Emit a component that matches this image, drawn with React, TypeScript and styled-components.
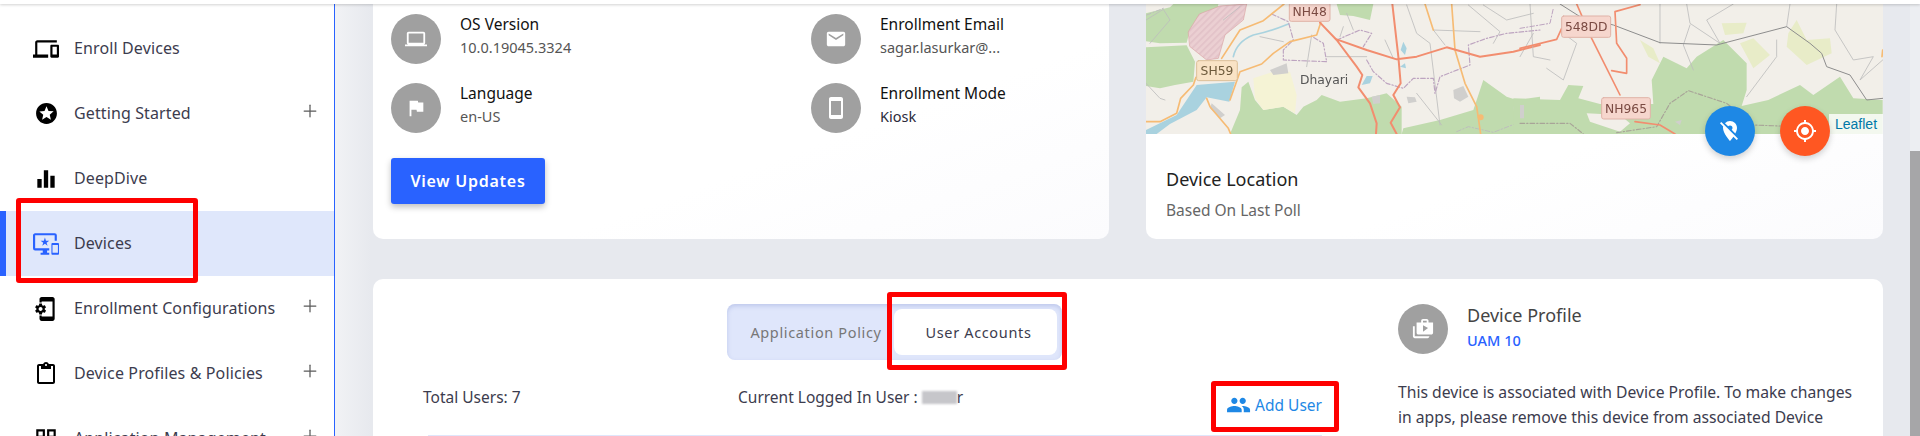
import React from "react";
import styled, { createGlobalStyle } from "styled-components";
import { Plus } from "lucide-react";
import {
  MdDevices, MdStars, MdEqualizer, MdImportantDevices, MdPhonelinkSetup, MdContentPaste, MdOutlineGridView,
  MdLaptop, MdFlag, MdEmail, MdStayCurrentPortrait, MdLocationOff, MdGpsFixed, MdPeople, MdShopTwo,
} from "react-icons/md";

const FONT = `"Noto Sans", "Noto Sans CJK JP", sans-serif`;

const Global = createGlobalStyle`
  html, body { margin: 0; padding: 0; height: 436px; overflow: hidden; background: #e8eaef; }
  * { box-sizing: border-box; }
  body { font-family: ${FONT}; }
`;

const Shell = styled.div`
  position: relative; width: 1920px; height: 436px; overflow: hidden; display: flex; flex-direction: column;
`;
const TopBar = styled.header`
  height: 4px; flex: none; background: #fff; box-shadow: 0 1px 3px rgba(0,0,0,.18); position: relative; z-index: 3;
`;
const Body = styled.div`
  flex: 1; min-height: 0; display: grid; grid-template-columns: 335px 1fr 10px;
`;
const Sidebar = styled.nav`
  background: #fff; border-right: 1px solid #2962ff; padding-top: 12px; overflow: hidden;
`;
const NavItem = styled.div<{ $active?: boolean }>`
  height: 65px; flex: none; display: flex; align-items: center; position: relative;
  background: ${p => (p.$active ? "#dfe7fb" : "transparent")};
  border-left: ${p => (p.$active ? "6px solid #2962ff" : "0")};
  padding-left: ${p => (p.$active ? "27px" : "33px")};
  color: ${p => (p.$active ? "#2962ff" : "#000")};
`;
const NavIcon = styled.span`
  width: 26px; height: 26px; display: flex; align-items: center; justify-content: center; flex: none; margin-right: 15px;
`;
const NavLabel = styled.span`
  font-size: 16px; line-height: 24px; color: #3c3c4e; flex: 1; letter-spacing: .12px; margin-top: -2px; white-space: nowrap;
`;
const Expand = styled.span`
  width: 20px; height: 20px; display: flex; margin-right: 14px; color: #5a5a5a; margin-top: -6px;
`;
const Main = styled.main`
  padding: 0 27px 0 38px; background: linear-gradient(90deg, #f1f2f5 0, #e7e9ee 36px);
  display: flex; flex-direction: column; gap: 40px; overflow: hidden;
`;
const TopRow = styled.div`
  display: grid; grid-template-columns: 736px 737px; gap: 37px; flex: none;
`;
const Card = styled.section`
  background: linear-gradient(160deg, #fff 60%, #fbfbfd);
  border-radius: 0 0 10px 10px; height: 235px; overflow: hidden;
`;
const InfoCard = styled(Card)`
  padding: 10px 18px 0;
`;
const InfoGrid = styled.div`
  display: grid; grid-template-columns: 420px 1fr; row-gap: 19px;
`;
const Info = styled.div`
  display: flex; gap: 19px;
`;
const Circle = styled.span`
  width: 50px; height: 50px; border-radius: 50%; background: #a0a0a0; color: #fff; flex: none;
  display: flex; align-items: center; justify-content: center;
`;
const InfoText = styled.div`
  margin-top: -2px; display: flex; flex-direction: column;
`;
const InfoTitle = styled.span`
  font-size: 15.5px; line-height: 24px; color: #111;
`;
const InfoValue = styled.span<{ $dark?: boolean }>`
  font-size: 14.5px; line-height: 24px; margin-top: -1px; color: ${p => (p.$dark ? "#2b2b3b" : "#555")};
`;
const ViewButton = styled.button`
  margin-top: 25px; width: 154px; height: 46px; border: 0; border-radius: 3px; background: #2962ff; color: #fff;
  font: 600 16px ${FONT}; letter-spacing: .75px; box-shadow: 0 3px 6px rgba(0,0,0,.25); display: block;
`;
const MapWrap = styled.div`
  position: relative; height: 130px;
`;
const MapSvg = styled.svg`
  display: block; width: 737px; height: 130px; filter: blur(.35px);
`;
const Attribution = styled.a`
  position: absolute; right: 0; bottom: 0; height: 20px; width: 54px; padding-left: 6px; background: rgba(255,255,255,.8);
  font: 14px/20px "Liberation Sans", sans-serif; color: #0078a8;
`;
const Fab = styled.span<{ $bg: string; $left: number }>`
  position: absolute; top: 102px; left: ${p => p.$left}px; width: 50px; height: 50px; border-radius: 50%;
  background: ${p => p.$bg}; color: #fff; display: flex; align-items: center; justify-content: center;
  box-shadow: 0 3px 6px rgba(0,0,0,.18);
`;
const Caption = styled.div`
  padding: 32px 20px 0;
`;
const CaptionTitle = styled.div`
  font-size: 18px; line-height: 26px; color: #222;
`;
const CaptionSub = styled.div`
  margin-top: 6px; font-size: 15.5px; line-height: 24px; color: #666;
`;
const WideCard = styled.section`
  background: #fff; border-radius: 10px 10px 0 0; display: grid; grid-template-columns: 1025px 1fr;
  flex: 1; padding-top: 25px; min-height: 200px;
`;
const LeftCol = styled.div`
  padding: 0 76px 0 50px; display: flex; flex-direction: column;
`;
const Tabs = styled.div`
  margin-left: 304px; width: 335px; height: 56px; border-radius: 8px; background: #dfe6fb; padding: 5px;
  display: flex; box-shadow: inset 0 2px 4px rgba(90,110,190,.25);
`;
const Tab = styled.div<{ $active?: boolean }>`
  height: 46px; flex: ${p => (p.$active ? "0 0 163px" : "1")}; border-radius: 8px; display: flex; align-items: center;
  background: ${p => (p.$active ? "#fff" : "transparent")}; justify-content: center; padding-left: 6px;
  font-size: 14.5px; font-weight: 400; letter-spacing: .65px; white-space: nowrap; color: ${p => (p.$active ? "#3c3c4e" : "#777")};
`;
const StatsRow = styled.div`
  margin-top: 25px; display: flex; height: 50px; align-items: flex-start; font-size: 15.5px; line-height: 24px; color: #3c3c4e;
`;
const Total = styled.span`
  width: 315px;
`;
const Current = styled.span`
  flex: 1; display: flex; align-items: center; white-space: nowrap;
`;
const Blurred = styled.span`
  display: inline-block; width: 35px; height: 13px; margin-left: 4px; background: #c6c6ca; filter: blur(1px);
`;
const AddUser = styled.span`
  display: flex; align-items: center; gap: 4px; margin-top: 7px; color: #1e88e5; font-size: 15.5px; width: 96px; flex: none; white-space: nowrap;
`;
const Divider = styled.div`
  margin-left: 5px; height: 1px; background: #dfe6fb;
`;
const ProfileCol = styled.div`
  width: 466px;
`;
const ProfileHead = styled.div`
  display: flex; gap: 19px; height: 50px;
`;
const ProfileText = styled.div`
  display: flex; flex-direction: column; margin-top: -2px;
`;
const ProfileTitle = styled.span`
  font-size: 18px; line-height: 26px; color: #444;
`;
const ProfileLink = styled.span`
  font-size: 14.5px; line-height: 24px; color: #2962ff; font-weight: 500;
`;
const ProfileBody = styled.p`
  margin: 26px 0 0; font-size: 15.7px; line-height: 25px; color: #3c3c4e;
`;
const Track = styled.div`
  padding-top: 147px; background: #eceef2;
`;
const Thumb = styled.div`
  height: 300px; background: #a6a6a8;
`;
const Callout = styled.div<{ $x: number; $y: number; $w: number; $h: number }>`
  position: absolute; left: ${p => p.$x}px; top: ${p => p.$y}px; width: ${p => p.$w}px; height: ${p => p.$h}px;
  border: 5px solid #fe0000; border-radius: 3px; z-index: 5; pointer-events: none;
`;

const ORANGE = "#f6bb74";
const RED = "#f28d6f";
const ADMIN = "#bda4c0";
const GREY = "#bdbdbd";
const FOREST = "#c0dbae";

const Shield = ({ x, y, w, h, label, warm }: { x: number; y: number; w: number; h: number; label: string; warm?: boolean }) => (
  <g>
    <rect x={x} y={y} width={w} height={h} rx={6} fill={warm ? "#f9e3c6" : "#f6d6cd"} stroke={warm ? "#dcbf98" : "#e0b3a8"} strokeWidth={3} />
    <text x={x + w / 2} y={y + h / 2 + 13} textAnchor="middle" fontSize={37} fontFamily="DejaVu Sans, sans-serif" fill={warm ? "#6d5a3c" : "#7a4a42"}>
      {label}
    </text>
  </g>
);

const MapDrawing = () => (
  <MapSvg viewBox="0 4 737 130" preserveAspectRatio="none">
    <defs>
      <pattern id="hatch" width="14" height="14" patternUnits="userSpaceOnUse" patternTransform="rotate(45)">
        <rect width="14" height="14" fill="#ebcfd2" />
        <rect width="5" height="14" fill="#e2c2c8" />
      </pattern>
    </defs>
    <rect x="0" y="0" width="737" height="134" fill="#f2efe9" />
    <g transform="translate(-6,0) scale(.33333)" fill="none" strokeLinecap="round" strokeLinejoin="round">
      <path fill={FOREST} d="M18 40 L90 22 L100 12 L235 12 L230 55 L150 90 L140 128 L60 130 L18 124Z" />
      <path fill={FOREST} d="M18 142 L140 136 L165 185 L160 245 L105 255 L60 265 L18 258Z" />
      <path fill={FOREST} d="M590 12 L700 12 L690 60 L640 48 L600 45Z" />
      <path fill={FOREST} d="M305 262 L325 245 L345 300 L370 330 L430 320 L470 345 L490 320 L530 300 L545 285 L600 305 L680 295 L740 280 L785 320 L785 402 L270 402 L300 330Z" />
      <path fill={FOREST} d="M1030 240 L1100 290 L1130 300 L1200 290 L1200 402 L785 402 L790 385 L900 360 L1000 330Z" />
      <path fill="#f5f3d5" d="M340 235 L400 215 L450 215 L470 285 L465 340 L430 320 L370 330 L345 295Z" />
      <path fill="#f2efe9" d="M180 330 L230 310 L265 340 L270 402 L140 402Z" />
      <path fill="url(#hatch)" stroke="#dba4a4" strokeWidth="2" d="M145 95 L178 42 L240 18 L320 12 L310 60 L255 105 L235 175 L200 180 L150 140Z" />
      <path stroke="#aad3df" strokeWidth="5" d="M280 170 Q290 125 340 105 Q390 95 445 72" />
      <path fill="#a9d2df" d="M18 402 L18 390 L110 345 L170 255 L285 245 L268 305 L200 292 L170 330 L90 372 L50 402Z" />
      <path fill="#a9d2df" d="M665 255 L680 228 L698 228 L690 250Z M782 150 L790 125 L800 145 L795 165Z M780 200 L795 190 L798 205Z" />
      <path fill="#d0cfcd" d="M940 270 L970 258 L985 290 L960 305 L942 295Z M1120 320 L1150 310 L1155 350 L1125 355Z M800 290 L825 292 L830 305 L805 310Z M695 290 L720 285 L720 310 L700 312Z M390 210 L440 190 L445 220 L400 225Z M215 310 L255 345 L240 355 L210 325Z" />
      <path stroke={GREY} strokeWidth="2.5" d="M18 60 L70 28 L90 60 L30 130 M18 250 L60 295 L75 300 M515 105 L500 200 M430 125 L360 110 M560 170 L680 170 M620 40 L640 90 M735 120 L760 175 M880 90 L915 135 M985 15 L1080 95 L1060 130 M1030 15 L1100 60 L1180 40 M800 15 L830 100 L870 130 L900 375 M830 280 L905 375 M880 90 L1020 95 M1180 100 L1140 170 M250 60 L300 20 M610 80 L600 110" />
      <path stroke={ADMIN} strokeWidth="3.5" strokeDasharray="14 6 4 6" d="M395 42 L445 65 L460 120 L430 150 L430 180 L560 185 L550 130 L520 112 M590 120 L660 90 L695 100 L670 140 M680 180 L700 215 L740 250 L790 265 L820 235 L880 235 L885 280 L900 230 L990 195 L985 135 L1040 115 L1100 100 L1200 90" />
      <path stroke={GREY} strokeWidth="3" strokeDasharray="14 6 4 6" d="M950 395 L985 380 L1060 397 L1130 370 L1200 365 M20 45 L70 25" />
      <path stroke={ORANGE} strokeWidth="5" d="M18 365 L60 365 L110 340 L122 295 L160 255 L168 232 M245 175 L300 90 L370 62 L432 12 M270 300 L300 215 L365 192 L400 160 L450 125 L530 105 L542 68 M200 295 L210 320 L265 385 L272 402 M855 12 L880 90 M935 12 L945 150 L975 250 L1010 320 L1022 402" />
      <circle cx="1022" cy="352" r="9" fill={ORANGE} />
      <path stroke={RED} strokeWidth="6" d="M540 68 L590 120 L650 200 L667 225 L655 262 L690 310 L710 370 L708 402 M590 118 L680 150 L770 178 L830 170 L920 142 L1020 170 L1120 155 L1200 135 M757 12 L775 170 L782 250 L760 285 L780 322 L752 368 L770 402" />
      <Shield x={448} y={8} w={122} h={56} label="NH48" />
      <Shield x={170} y={182} w={122} h={60} label="SH59" warm />
      <text x="480" y="252" fontSize="37" fontFamily="DejaVu Sans, sans-serif" fill="#555">Dhayari</text>
    </g>
    <g transform="translate(374,0) scale(.33333)" fill="none" strokeLinecap="round" strokeLinejoin="round">
      <path fill={FOREST} d="M-20 295 L120 300 L145 255 L190 258 L175 295 L240 312 L400 312 L395 240 L430 170 L500 205 L530 170 L610 120 L680 190 L680 270 L665 318 L745 300 L840 255 L880 285 L960 230 L1000 295 L1088 300 L1088 402 L-20 402Z" />
      <path fill="#e8ecc8" d="M605 70 L680 68 L670 100 L615 105Z M805 100 L830 60 L860 120 L930 115 L935 160 L860 195 L800 140Z M660 130 L700 115 L750 165 L700 205Z M360 120 L400 145 L420 190 L385 170Z" />
      <path fill="#f2efe9" d="M200 340 L300 345 L330 370 L300 395 L210 365Z" />
      <path stroke={GREY} strokeWidth="2.5" d="M30 12 L40 170 L90 180 M80 205 L130 240 L170 130 L130 100 M500 12 L510 70 L600 130 L560 60 L640 12 M810 12 L800 80 M950 12 L945 90 L1000 180 L1060 170 L1020 240 L1088 180 M680 290 L770 170 L770 120 M510 75 L490 135 L520 210 M420 12 L420 130" />
      <path stroke="#8d8d8d" strokeWidth="3" d="M120 12 L180 50 L280 75 L420 128 L590 135 L800 80 L870 130 L905 160 L920 200 L990 225 L1040 300 L1088 295" />
      <path stroke={ADMIN} strokeWidth="3" strokeDasharray="14 6 4 6" d="M0 85 L90 70 L100 25" />
      <path stroke="#a8a498" strokeWidth="3.5" strokeDasharray="14 6 4 6" d="M0 370 L150 370 L190 402 M290 398 L410 380 L450 310 L505 272 L620 310 L700 375 L780 378" />
      <path stroke={RED} strokeWidth="5" d="M0 145 L110 118 L125 85 M170 12 L215 115 L300 285 M290 130 L285 35 L360 14 M290 130 L320 175 L320 220 L275 212 M345 365 L420 375 L465 402" />
      <path stroke={ORANGE} strokeWidth="5" d="M1088 150 L1086 170" />
      <path fill="#d0cfcd" d="M0 315 L12 315 L12 355 L0 355Z M465 365 L485 360 L480 375Z" />
      <Shield x={125} y={48} w={147} h={64} label="548DD" />
      <Shield x={245} y={293} w={146} h={64} label="NH965" />
    </g>
  </MapSvg>
);

const nav = [
  { label: "Enroll Devices", icon: <MdDevices size={26} /> },
  { label: "Getting Started", icon: <MdStars size={25} />, expand: true },
  { label: "DeepDive", icon: <MdEqualizer size={26} /> },
  { label: "Devices", icon: <MdImportantDevices size={26} />, active: true },
  { label: "Enrollment Configurations", icon: <MdPhonelinkSetup size={26} />, expand: true },
  { label: "Device Profiles & Policies", icon: <MdContentPaste size={24} />, expand: true },
  { label: "Application Management", icon: <MdOutlineGridView size={26} />, expand: true },
];

export default function App() {
  return (
    <Shell>
      <Global />
      <TopBar />
      <Body>
        <Sidebar>
          {nav.map(n => (
            <NavItem key={n.label} $active={n.active}>
              <NavIcon>{n.icon}</NavIcon>
              <NavLabel>{n.label}</NavLabel>
              {n.expand && (
                <Expand>
                  <Plus size={20} strokeWidth={1.5} />
                </Expand>
              )}
            </NavItem>
          ))}
        </Sidebar>
        <Main>
          <TopRow>
            <InfoCard>
              <InfoGrid>
                <Info>
                  <Circle><MdLaptop size={22} /></Circle>
                  <InfoText>
                    <InfoTitle>OS Version</InfoTitle>
                    <InfoValue>10.0.19045.3324</InfoValue>
                  </InfoText>
                </Info>
                <Info>
                  <Circle><MdEmail size={22} /></Circle>
                  <InfoText>
                    <InfoTitle>Enrollment Email</InfoTitle>
                    <InfoValue>sagar.lasurkar@...</InfoValue>
                  </InfoText>
                </Info>
                <Info>
                  <Circle><MdFlag size={22} /></Circle>
                  <InfoText>
                    <InfoTitle>Language</InfoTitle>
                    <InfoValue>en-US</InfoValue>
                  </InfoText>
                </Info>
                <Info>
                  <Circle><MdStayCurrentPortrait size={24} /></Circle>
                  <InfoText>
                    <InfoTitle>Enrollment Mode</InfoTitle>
                    <InfoValue $dark>Kiosk</InfoValue>
                  </InfoText>
                </Info>
              </InfoGrid>
              <ViewButton>View Updates</ViewButton>
            </InfoCard>
            <Card>
              <MapWrap>
                <MapDrawing />
                <Attribution>Leaflet</Attribution>
                <Fab $bg="#1e88e5" $left={559}><MdLocationOff size={24} /></Fab>
                <Fab $bg="#ff5722" $left={634}><MdGpsFixed size={24} /></Fab>
              </MapWrap>
              <Caption>
                <CaptionTitle>Device Location</CaptionTitle>
                <CaptionSub>Based On Last Poll</CaptionSub>
              </Caption>
            </Card>
          </TopRow>
          <WideCard>
            <LeftCol>
              <Tabs>
                <Tab>Application Policy</Tab>
                <Tab $active>User Accounts</Tab>
              </Tabs>
              <StatsRow>
                <Total>Total Users: 7</Total>
                <Current>Current Logged In User :<Blurred />r</Current>
                <AddUser><MdPeople size={26} />Add User</AddUser>
              </StatsRow>
              <Divider />
            </LeftCol>
            <ProfileCol>
              <ProfileHead>
                <Circle><MdShopTwo size={22} /></Circle>
                <ProfileText>
                  <ProfileTitle>Device Profile</ProfileTitle>
                  <ProfileLink>UAM 10</ProfileLink>
                </ProfileText>
              </ProfileHead>
              <ProfileBody>
                This device is associated with Device Profile. To make changes in apps, please remove this device from associated Device profile.
              </ProfileBody>
            </ProfileCol>
          </WideCard>
        </Main>
        <Track><Thumb /></Track>
      </Body>
      <Callout $x={16} $y={198} $w={182} $h={85} />
      <Callout $x={887} $y={292} $w={180} $h={78} />
      <Callout $x={1211} $y={381} $w={128} $h={51} />
    </Shell>
  );
}
